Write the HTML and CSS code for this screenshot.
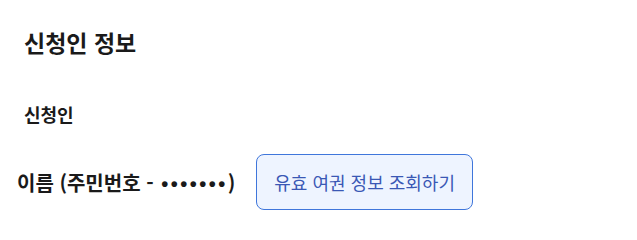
FILE: index.html
```html
<!DOCTYPE html>
<html lang="ko">
<head>
<meta charset="utf-8">
<link rel="stylesheet" href="styles.css">
</head>
<body>
<section class="panel">
  <h2 class="title">신청인 정보</h2>
  <h3 class="subtitle">신청인</h3>
  <div class="row">
    <span class="name">이름 (주민번호 - <span class="dots">•••••••</span>)</span>
    <button class="lookup" type="button">유효 여권 정보 조회하기</button>
  </div>
</section>
</body>
</html>
```
FILE: styles.css
```css
html, body {
  margin: 0;
  padding: 0;
  background: #ffffff;
}
body {
  font-family: "Noto Sans CJK KR", "Noto Sans", sans-serif;
  color: #1a1a1a;
}
.panel {
  padding: 24px 0 0 0;
}
.title {
  margin: 0 0 0 24px;
  font-size: 23px;
  font-weight: 700;
  line-height: 36px;
}
.subtitle {
  margin: 42px 0 0 24px;
  font-size: 18px;
  font-weight: 700;
  line-height: 24px;
}
.row {
  display: flex;
  align-items: center;
  gap: 21px;
  margin: 28px 0 0 17px;
}
.name {
  font-size: 20px;
  font-weight: 700;
}
.dots {
  font-family: "Liberation Sans", sans-serif;
  letter-spacing: 2.5px;
  margin-left: 2px;
}
.lookup {
  font-family: inherit;
  font-size: 18px;
  color: #3a58b5;
  background: #eef4ff;
  border: 1px solid #3f76db;
  border-radius: 8px;
  height: 56px;
  padding: 0 17px;
}
```
